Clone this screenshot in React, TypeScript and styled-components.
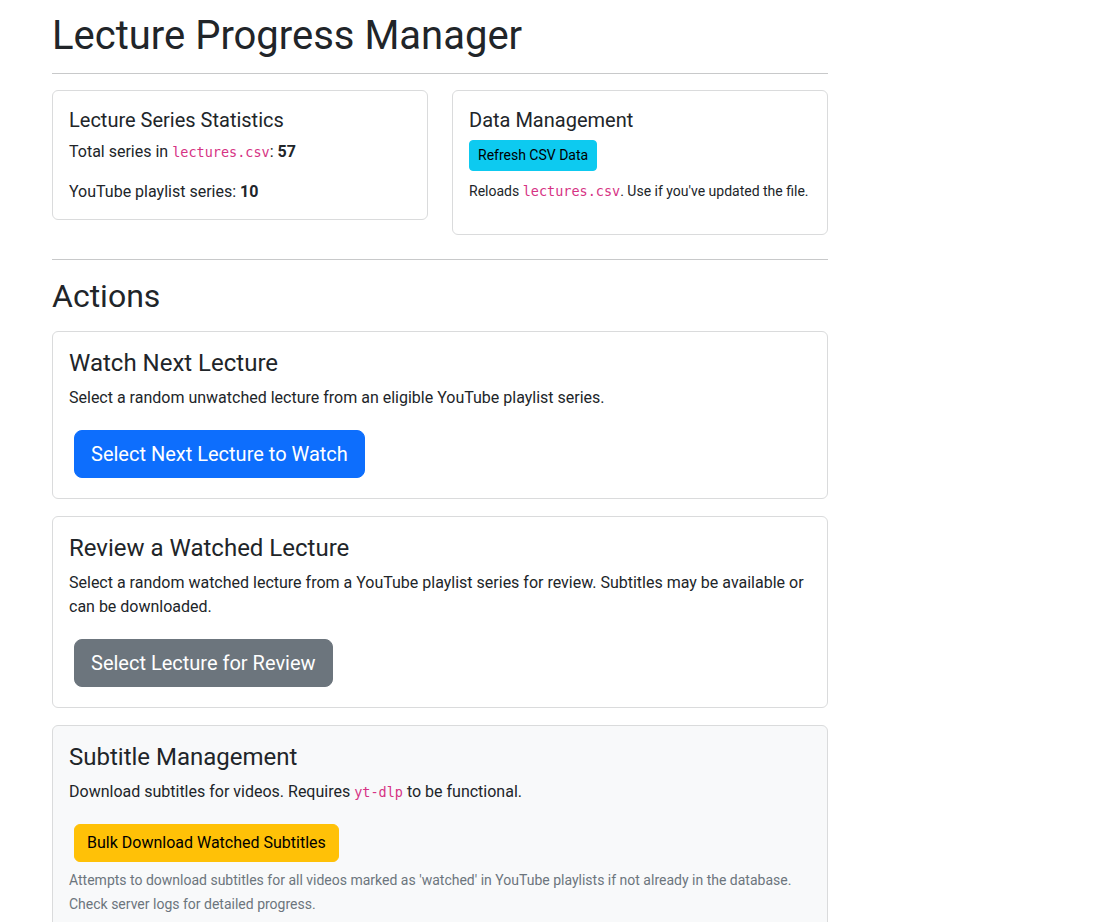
import React from "react";
import styled, { createGlobalStyle, css } from "styled-components";

const GlobalStyle = createGlobalStyle`
  *, *::before, *::after { box-sizing: border-box; }
  body {
    margin: 0;
    background: #ffffff;
    color: #212529;
    font-family: Roboto, "Noto Sans", sans-serif;
    font-size: 16px;
    line-height: 1.5;
  }
`;

const Container = styled.main`
  width: 800px;
  margin-left: 40px;
  padding: 12px 12px 0;
`;

const PageTitle = styled.h1`
  margin: 0;
  font-size: 40px;
  font-weight: 400;
  line-height: 1.2;
`;

const Divider = styled.hr<{ $top?: number }>`
  margin: ${(p) => p.$top ?? 16}px 0 16px;
  border: 0;
  border-top: 1px solid #c8c9ca;
`;

const StatsRow = styled.div`
  display: grid;
  grid-template-columns: 1fr 1fr;
  column-gap: 24px;
  align-items: start;
  margin: 16px 0 24px;
`;

const SectionTitle = styled.h2`
  margin: 0 0 16px;
  padding-top: 1px;
  font-size: 32px;
  font-weight: 400;
  line-height: 1.2;
`;

const ActionList = styled.div`
  display: flex;
  flex-direction: column;
  gap: 17px;
`;

const Card = styled.section<{ $light?: boolean }>`
  border: 1px solid #dadbdc;
  border-radius: 6px;
  background: ${(p) => (p.$light ? "#f8f9fa" : "#ffffff")};
`;

const CardBody = styled.div`
  padding: 17px 16px 15px;
`;

const CardTitle = styled.h5<{ $large?: boolean }>`
  margin: 0 0 8px;
  font-weight: 400;
  font-size: ${(p) => (p.$large ? "24px" : "20px")};
  line-height: 1.2;
`;

const Text = styled.p<{ $last?: boolean }>`
  margin: 0 0 ${(p) => (p.$last ? "0" : "16px")};
`;

const Note = styled.p`
  margin: 8px 0 16px;
  small {
    font-size: 14px;
  }
`;

const MutedNote = styled.p`
  margin: 1px 0 16px;
  font-size: 14px;
  line-height: 24px;
  color: #6c757d;
`;

const Code = styled.code`
  font-family: "DejaVu Sans Mono", "Liberation Mono", monospace;
  font-size: 13.5px;
  color: #d63384;
`;

const ButtonRow = styled.div`
  padding: 4px 5px 5px;
`;

type Variant = "primary" | "secondary" | "info" | "warning";
type Size = "sm" | "md" | "lg";

const variants: Record<Variant, { bg: string; fg: string }> = {
  primary: { bg: "#0d6efd", fg: "#ffffff" },
  secondary: { bg: "#6c757d", fg: "#ffffff" },
  info: { bg: "#0dcaf0", fg: "#000000" },
  warning: { bg: "#ffc107", fg: "#000000" },
};

const sizes: Record<Size, ReturnType<typeof css>> = {
  sm: css`
    padding: 4px 8px;
    font-size: 14px;
    line-height: 21px;
    border-radius: 4px;
  `,
  md: css`
    padding: 6px 12px;
    font-size: 16px;
    line-height: 24px;
    border-radius: 6px;
  `,
  lg: css`
    padding: 8px 16px;
    font-size: 20px;
    line-height: 30px;
    border-radius: 8px;
  `,
};

const Button = styled.button<{ $variant: Variant; $size: Size }>`
  display: inline-block;
  font-family: inherit;
  font-weight: 400;
  border: 1px solid ${(p) => variants[p.$variant].bg};
  background: ${(p) => variants[p.$variant].bg};
  color: ${(p) => variants[p.$variant].fg};
  cursor: pointer;
  ${(p) => sizes[p.$size]}
`;

export default function App() {
  return (
    <>
      <GlobalStyle />
      <Container>
        <PageTitle>Lecture Progress Manager</PageTitle>
        <Divider $top={13} />
        <StatsRow>
          <Card>
            <CardBody>
              <CardTitle>Lecture Series Statistics</CardTitle>
              <Text>
                Total series in <Code>lectures.csv</Code>: <strong>57</strong>
              </Text>
              <Text $last>
                YouTube playlist series: <strong>10</strong>
              </Text>
            </CardBody>
          </Card>
          <Card>
            <CardBody>
              <CardTitle>Data Management</CardTitle>
              <Button $variant="info" $size="sm">
                Refresh CSV Data
              </Button>
              <Note>
                <small>
                  Reloads <Code>lectures.csv</Code>. Use if you've updated the file.
                </small>
              </Note>
            </CardBody>
          </Card>
        </StatsRow>
        <Divider />
        <SectionTitle>Actions</SectionTitle>

        <ActionList>
          <Card>
            <CardBody>
              <CardTitle $large>Watch Next Lecture</CardTitle>
              <Text>Select a random unwatched lecture from an eligible YouTube playlist series.</Text>
              <ButtonRow>
                <Button $variant="primary" $size="lg">
                  Select Next Lecture to Watch
                </Button>
              </ButtonRow>
            </CardBody>
          </Card>

          <Card>
            <CardBody>
              <CardTitle $large>Review a Watched Lecture</CardTitle>
              <Text>
                Select a random watched lecture from a YouTube playlist series for review. Subtitles may be
                available or can be downloaded.
              </Text>
              <ButtonRow>
                <Button $variant="secondary" $size="lg">
                  Select Lecture for Review
                </Button>
              </ButtonRow>
            </CardBody>
          </Card>

          <Card $light>
            <CardBody>
              <CardTitle $large>Subtitle Management</CardTitle>
              <Text>
                Download subtitles for videos. Requires <Code>yt-dlp</Code> to be functional.
              </Text>
              <ButtonRow>
                <Button $variant="warning" $size="md">
                  Bulk Download Watched Subtitles
                </Button>
              </ButtonRow>
              <MutedNote>
                Attempts to download subtitles for all videos marked as 'watched' in YouTube playlists if not
                already in the database. Check server logs for detailed progress.
              </MutedNote>
            </CardBody>
          </Card>
        </ActionList>
      </Container>
    </>
  );
}
